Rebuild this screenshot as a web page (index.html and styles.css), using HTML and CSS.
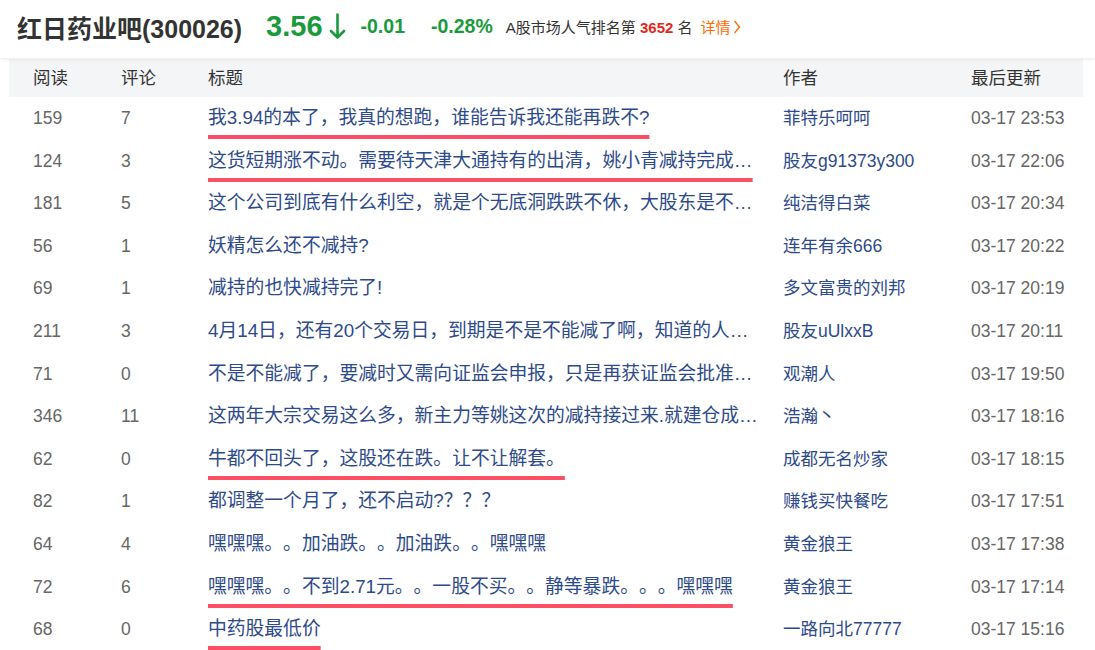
FILE: index.html
```html
<!DOCTYPE html>
<html lang="zh-CN">
  <head>
    <meta charset="UTF-8" />
    <title>红日药业吧(300026)</title>
    <link rel="stylesheet" href="styles.css">
  </head>
  <body>
    <header class="topbar">
      <h1 class="bar-name">红日药业吧(300026)</h1>
      <span class="price">3.56</span>
      <svg class="arrow-down" width="17" height="27" viewBox="0 0 17 27">
        <path d="M8.5 1.5 V24.5 M2 18 L8.5 24.5 L15 18" fill="none" stroke="#1a9a3c" stroke-width="2.6" stroke-linecap="round" stroke-linejoin="round"/>
      </svg>
      <span class="change">-0.01</span>
      <span class="change pct">-0.28%</span>
      <span class="rank">A股市场人气排名第 <b>3652</b> 名</span>
      <a href="#" class="detail">详情<svg width="8" height="14" viewBox="0 0 8 14"><path d="M1.5 1 L6.5 7 L1.5 13" fill="none" stroke="#ff6a00" stroke-width="1.3"/></svg></a>
    </header>

    <div class="list">
      <div class="row head">
        <span>阅读</span>
        <span>评论</span>
        <span>标题</span>
        <span>作者</span>
        <span>最后更新</span>
      </div>

      <div class="row">
        <span class="num">159</span>
        <span class="num">7</span>
        <span class="title"><a href="#" class="marked">我3.94的本了，我真的想跑，谁能告诉我还能再跌不?</a></span>
        <span class="author"><a href="#">菲特乐呵呵</a></span>
        <span class="time">03-17 23:53</span>
      </div>
      <div class="row">
        <span class="num">124</span>
        <span class="num">3</span>
        <span class="title"><a href="#" class="marked">这货短期涨不动。需要待天津大通持有的出清，姚小青减持完成…</a></span>
        <span class="author"><a href="#">股友g91373y300</a></span>
        <span class="time">03-17 22:06</span>
      </div>
      <div class="row">
        <span class="num">181</span>
        <span class="num">5</span>
        <span class="title"><a href="#">这个公司到底有什么利空，就是个无底洞跌跌不休，大股东是不…</a></span>
        <span class="author"><a href="#">纯洁得白菜</a></span>
        <span class="time">03-17 20:34</span>
      </div>
      <div class="row">
        <span class="num">56</span>
        <span class="num">1</span>
        <span class="title"><a href="#">妖精怎么还不减持?</a></span>
        <span class="author"><a href="#">连年有余666</a></span>
        <span class="time">03-17 20:22</span>
      </div>
      <div class="row">
        <span class="num">69</span>
        <span class="num">1</span>
        <span class="title"><a href="#">减持的也快减持完了!</a></span>
        <span class="author"><a href="#">多文富贵的刘邦</a></span>
        <span class="time">03-17 20:19</span>
      </div>
      <div class="row">
        <span class="num">211</span>
        <span class="num">3</span>
        <span class="title"><a href="#">4月14日，还有20个交易日，到期是不是不能减了啊，知道的人…</a></span>
        <span class="author"><a href="#">股友uUlxxB</a></span>
        <span class="time">03-17 20:11</span>
      </div>
      <div class="row">
        <span class="num">71</span>
        <span class="num">0</span>
        <span class="title"><a href="#">不是不能减了，要减时又需向证监会申报，只是再获证监会批准…</a></span>
        <span class="author"><a href="#">观潮人</a></span>
        <span class="time">03-17 19:50</span>
      </div>
      <div class="row">
        <span class="num">346</span>
        <span class="num">11</span>
        <span class="title"><a href="#">这两年大宗交易这么多，新主力等姚这次的减持接过来.就建仓成…</a></span>
        <span class="author"><a href="#">浩瀚丶</a></span>
        <span class="time">03-17 18:16</span>
      </div>
      <div class="row">
        <span class="num">62</span>
        <span class="num">0</span>
        <span class="title"><a href="#" class="marked">牛都不回头了，这股还在跌。让不让解套。</a></span>
        <span class="author"><a href="#">成都无名炒家</a></span>
        <span class="time">03-17 18:15</span>
      </div>
      <div class="row">
        <span class="num">82</span>
        <span class="num">1</span>
        <span class="title"><a href="#">都调整一个月了，还不启动?？？？</a></span>
        <span class="author"><a href="#">赚钱买快餐吃</a></span>
        <span class="time">03-17 17:51</span>
      </div>
      <div class="row">
        <span class="num">64</span>
        <span class="num">4</span>
        <span class="title"><a href="#">嘿嘿嘿。。加油跌。。加油跌。。嘿嘿嘿</a></span>
        <span class="author"><a href="#">黄金狼王</a></span>
        <span class="time">03-17 17:38</span>
      </div>
      <div class="row">
        <span class="num">72</span>
        <span class="num">6</span>
        <span class="title"><a href="#" class="marked">嘿嘿嘿。。不到2.71元。。一股不买。。静等暴跌。。。嘿嘿嘿</a></span>
        <span class="author"><a href="#">黄金狼王</a></span>
        <span class="time">03-17 17:14</span>
      </div>
      <div class="row">
        <span class="num">68</span>
        <span class="num">0</span>
        <span class="title"><a href="#" class="marked">中药股最低价</a></span>
        <span class="author"><a href="#">一路向北77777</a></span>
        <span class="time">03-17 15:16</span>
      </div>
    </div>
  </body>
</html>
```

FILE: styles.css
```css
body {
  font-family: "Liberation Sans", Arial, "Noto Sans CJK SC", sans-serif;
  background-color: #fff;
  margin: 0;
  padding: 0;
  overflow: hidden;
  text-spacing-trim: space-all;
}

a {
  text-decoration: none;
}

.topbar {
  height: 58px;
  box-sizing: border-box;
  display: flex;
  align-items: center;
  padding: 0 17px 5px;
  background-color: #fff;
  box-shadow: 0 1px 4px rgba(0, 0, 0, 0.09);
  position: relative;
  z-index: 1;
}

.bar-name {
  margin: 0 24px 0 0;
  font-size: 25px;
  font-weight: bold;
  color: #333;
  white-space: nowrap;
}

.price {
  font-size: 29px;
  font-weight: bold;
  color: #1a9a3c;
}

.arrow-down {
  margin: 0 15px 0 6px;
}

.change {
  font-size: 19.5px;
  font-weight: bold;
  color: #1a9a3c;
  margin-right: 26px;
}

.change.pct {
  margin-right: 13px;
}

.rank {
  font-size: 15px;
  color: #333;
  white-space: nowrap;
}

.rank b {
  color: #e0281c;
}

.detail {
  margin-left: 8px;
  font-size: 15px;
  color: #ff6a00;
  display: flex;
  align-items: center;
  gap: 2px;
}

.list {
  margin: 1px 12px 0 9px;
}

.row {
  display: grid;
  grid-template-columns: 88px 87px 575px 188px 1fr;
  height: 42.6px;
  line-height: 42.6px;
  font-size: 17.5px;
}

.row > span {
  padding-left: 24px;
  white-space: nowrap;
  overflow: hidden;
}

.row.head {
  height: 38px;
  line-height: 38px;
  background-color: #f4f5f7;
  color: #333;
}

.num,
.time {
  color: #666;
}

.title {
  padding-right: 2px;
  font-size: 18.8px;
}

.title a,
.author a {
  color: #2d4a8b;
}

.title a.marked {
  text-decoration: underline;
  text-decoration-color: #fd4f63;
  text-decoration-thickness: 3.5px;
  text-underline-offset: 11px;
  text-decoration-skip-ink: none;
}
```
